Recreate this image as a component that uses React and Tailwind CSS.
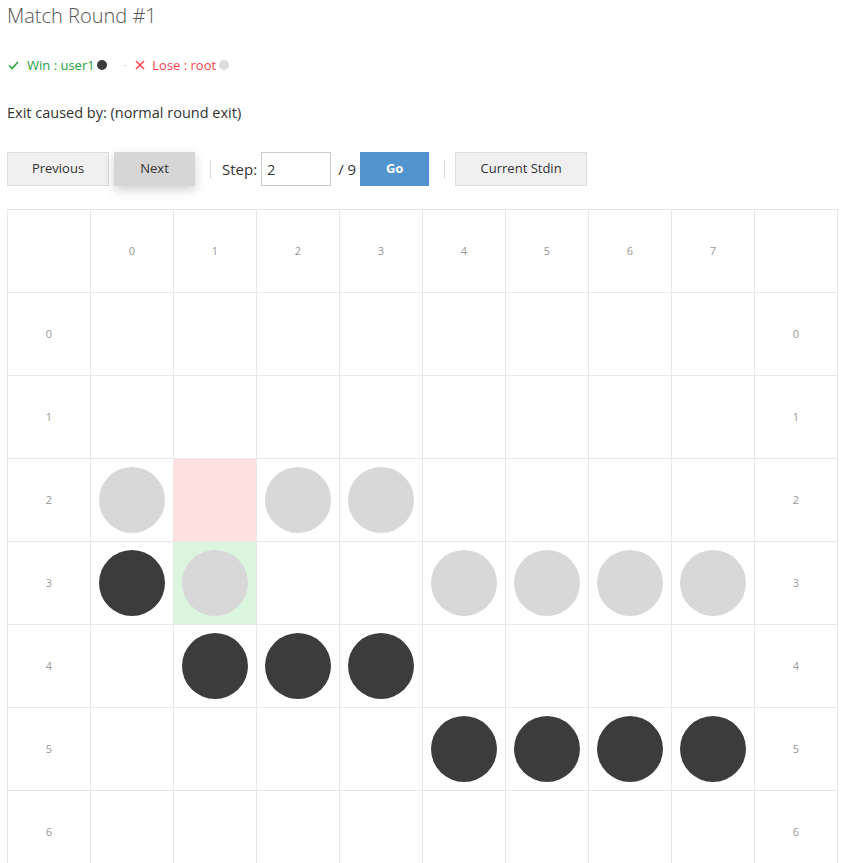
import React from "react";

const COLS = 8;
const ROWS = 8;

// board state: "d" = dark stone, "l" = light stone
const stones = {
  "2-0": "l", "2-2": "l", "2-3": "l",
  "3-0": "d", "3-1": "l", "3-4": "l", "3-5": "l", "3-6": "l", "3-7": "l",
  "4-1": "d", "4-2": "d", "4-3": "d",
  "5-4": "d", "5-5": "d", "5-6": "d", "5-7": "d",
};
const highlights = { "2-1": "bg-[#fde0df]", "3-1": "bg-[#dcf5de]" };

function Label({ children }) {
  return (
    <div className="bg-white flex items-center justify-center text-[11px] text-[#999]">
      {children}
    </div>
  );
}

function Cell({ r, c }) {
  const key = `${r}-${c}`;
  const s = stones[key];
  const bg = highlights[key] || "bg-white";
  return (
    <div className={`${bg} flex items-center justify-center`}>
      {s === "d" && <div className="w-[66px] h-[66px] rounded-full bg-[#3c3c3c]" />}
      {s === "l" && <div className="w-[66px] h-[66px] rounded-full bg-[#d8d8d8]" />}
    </div>
  );
}

export default function App() {
  const cells = [];
  cells.push(<Label key="tl" />);
  for (let c = 0; c < COLS; c++) cells.push(<Label key={`h${c}`}>{c}</Label>);
  cells.push(<Label key="tr" />);
  for (let r = 0; r < ROWS; r++) {
    cells.push(<Label key={`l${r}`}>{r}</Label>);
    for (let c = 0; c < COLS; c++) cells.push(<Cell key={`${r}-${c}`} r={r} c={c} />);
    cells.push(<Label key={`r${r}`}>{r}</Label>);
  }
  cells.push(<Label key="bl" />);
  for (let c = 0; c < COLS; c++) cells.push(<Label key={`f${c}`}>{c}</Label>);
  cells.push(<Label key="br" />);

  return (
    <div className="px-[7px] pb-6 font-['Open_Sans',sans-serif] text-[#333] bg-white">
      <h1 className="text-[20px] leading-[32px] font-light text-[#555]">Match Round #1</h1>

      <div className="mt-[24px] flex items-center text-[13px] leading-[18px]">
        <svg className="ml-[1px] mr-[8px]" width="11" height="9" viewBox="0 0 11 9">
          <path d="M1 4.5 L4 7.5 L10 1" fill="none" stroke="#27a044" strokeWidth="1.6" />
        </svg>
        <span className="text-[#27a044]">Win : user1</span>
        <span className="ml-[2px] w-[10px] h-[10px] rounded-full bg-[#3c3c3c]" />
        <span className="ml-[17px] text-[#bbb] text-[10px]">·</span>
        <svg className="ml-[9px] mr-[7px]" width="10" height="10" viewBox="0 0 10 10">
          <path d="M1 1 L9 9 M9 1 L1 9" fill="none" stroke="#f5454b" strokeWidth="1.5" />
        </svg>
        <span className="text-[#f5454b]">Lose : root</span>
        <span className="ml-[3px] w-[10px] h-[10px] rounded-full bg-[#dcdcdc]" />
      </div>

      <div className="mt-[29px] text-[14.5px] leading-[20px] font-medium text-[#333]">
        Exit caused by: (normal round exit)
      </div>

      <div className="mt-[29px] flex items-center text-[13px]">
        <button className="w-[102px] h-[34px] bg-[#f0f0f0] border border-[#dedede] text-[#333]">Previous</button>
        <button className="ml-[5px] w-[81px] h-[34px] bg-[#d6d6d6] text-[#333] shadow-[0_4px_10px_rgba(0,0,0,0.18)]">Next</button>
        <span className="ml-[15px] w-px h-[18px] bg-[#ddd]" />
        <span className="ml-[11px] text-[15px] text-[#333]">Step:</span>
        <input
          defaultValue="2"
          className="ml-[4px] w-[70px] h-[34px] border border-[#ccc] px-[5px] text-[14px] text-[#333] outline-none"
        />
        <span className="ml-[7px] text-[15px] text-[#333]">/ 9</span>
        <button className="ml-[4px] w-[69px] h-[34px] bg-[#5294cf] text-white font-bold">Go</button>
        <span className="ml-[15px] w-px h-[18px] bg-[#ddd]" />
        <button className="ml-[10px] w-[132px] h-[34px] bg-[#f0f0f0] border border-[#dedede] text-[#333]">Current Stdin</button>
      </div>

      <div className="mt-[23px] inline-grid grid-cols-[repeat(10,82px)] auto-rows-[82px] gap-px p-px bg-[#e8e8e8]">
        {cells}
      </div>
    </div>
  );
}
